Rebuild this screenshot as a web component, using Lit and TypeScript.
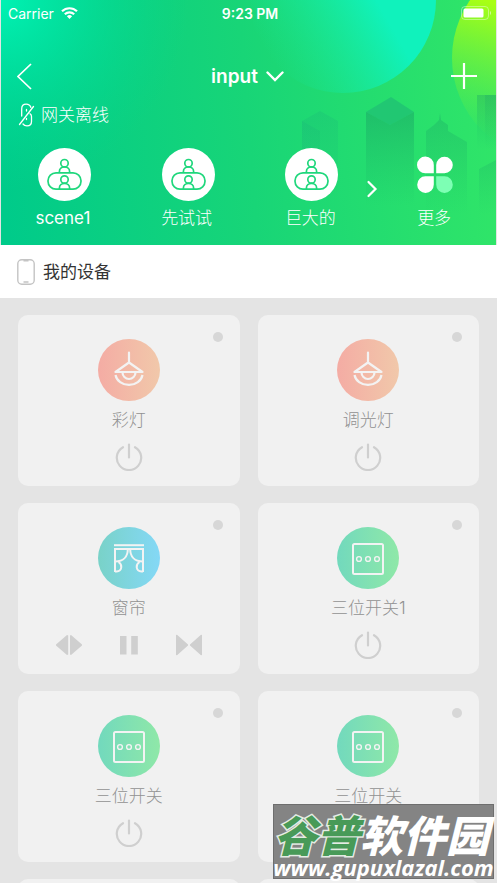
import { LitElement, html, svg, css } from "lit";
import { customElement, property } from "lit/decorators.js";

type Kind = "lamp" | "curtain" | "switch";
interface Device {
  name: string;
  kind: Kind;
}

const SCENES = ["scene1", "先试试", "巨大的"];

const DEVICES: Device[] = [
  { name: "彩灯", kind: "lamp" },
  { name: "调光灯", kind: "lamp" },
  { name: "窗帘", kind: "curtain" },
  { name: "三位开关1", kind: "switch" },
  { name: "三位开关", kind: "switch" },
  { name: "三位开关", kind: "switch" },
];

const glyphs = {
  lamp: svg`
    <path d="M31 13.5V23M31 23.5L17.5 33H44.5Z" stroke-width="2.2"/>
    <path d="M24.5 33.5a6.5 6.5 0 0 0 13 0M17.5 36a13.7 12 0 0 0 27 0" stroke-width="2.2" stroke-linecap="butt"/>`,
  curtain: svg`
    <g stroke-width="2" stroke-linecap="butt" stroke-linejoin="miter">
      <path d="M16 18.2H46"/>
      <path d="M17 45V22H45V45"/>
      <path d="M29.800 22C29.800 29 26 34.500 17 34.500M32.200 22C32.200 29 36 34.500 45 34.500"/>
      <path d="M20.500 35C24.500 37.500 24.500 44 18.500 44.500H17M41.500 35C37.500 37.500 37.500 44 43.500 44.500H45"/>
    </g>`,
  switch: svg`
    <rect x="16" y="17" width="30" height="30" rx="1.5" stroke-width="2"/>
    <g stroke-width="1.4"><circle cx="22" cy="32" r="2.4"/><circle cx="31" cy="32" r="2.4"/><circle cx="40" cy="32" r="2.4"/></g>`,
};

@customElement("device-card")
export class DeviceCard extends LitElement {
  @property({ attribute: false }) device!: Device;

  static styles = css`
    :host {
      display: flex;
      flex-direction: column;
      align-items: center;
      position: relative;
      box-sizing: border-box;
      padding: 24px 12px 15px;
      border-radius: 10px;
      background: #f1f1f1;
    }
    .dot {
      position: absolute;
      top: 17px;
      right: 17px;
      width: 10px;
      height: 10px;
      border-radius: 50%;
      background: #d7d7d7;
    }
    .icon {
      width: 62px;
      height: 62px;
      border-radius: 50%;
    }
    .icon svg,
    button svg {
      display: block;
      fill: none;
    }
    .icon svg {
      stroke: #f3f3f3;
      stroke-linecap: round;
      stroke-linejoin: round;
    }
    .lamp {
      background: linear-gradient(90deg, #f4aca4, #f1c8aa);
    }
    .curtain {
      background: linear-gradient(90deg, #79d2c8, #84d8f6);
    }
    .switch {
      background: linear-gradient(90deg, #72d9bd, #8fe8a8);
    }
    h2 {
      margin: 7px 0 11px;
      font-size: 17px;
      font-weight: 300;
      line-height: 24px;
      color: #929292;
    }
    .controls {
      display: flex;
      gap: 32px;
    }
    button {
      padding: 0;
      border: 0;
      background: none;
      color: #cfcfcf;
    }
    .fill {
      fill: currentColor;
    }
  `;

  private controls() {
    if (this.device.kind !== "curtain") {
      return html`<button aria-label="电源">
        <svg width="28" height="28" viewBox="0 0 28 28" stroke="currentColor" stroke-width="2.2" stroke-linecap="round">
          <path d="M14 1.500V14.500M8 4.200a12.200 12.200 0 1 0 12 0" />
        </svg>
      </button>`;
    }
    return html`
      <button aria-label="打开">
        <svg width="28" height="28" viewBox="0 0 28 28">
          <path class="fill" d="M13.200 4.500V23.500L12 24L1 14.500V13.500L12 4ZM15 4.500V23.500L16 24L27 14.500V13.500L16 4Z" />
        </svg>
      </button>
      <button aria-label="暂停">
        <svg width="28" height="28" viewBox="0 0 28 28">
          <path class="fill" d="M5 5H11.500V23.500H5ZM16.200 5H22.800V23.500H16.200Z" />
        </svg>
      </button>
      <button aria-label="关闭">
        <svg width="28" height="28" viewBox="0 0 28 28">
          <path class="fill" d="M1 4L2 3.800L13 13.500V14.500L2 24.200L1 24ZM27 4L26 3.800L15 13.500V14.500L26 24.200L27 24Z" />
        </svg>
      </button>
    `;
  }

  render() {
    return html`
      <span class="dot"></span>
      <div class="icon ${this.device.kind}">
        <svg width="62" height="62" viewBox="0 0 62 62">${glyphs[this.device.kind]}</svg>
      </div>
      <h2>${this.device.name}</h2>
      <div class="controls">${this.controls()}</div>
    `;
  }
}

@customElement("app-root")
export class AppRoot extends LitElement {
  static styles = css`
    :host {
      display: flex;
      flex-direction: column;
      position: relative;
      height: 100vh;
      overflow: hidden;
      background: #e4e4e4;
      font-family: Inter, "Noto Sans CJK SC", sans-serif;
    }
    button {
      padding: 0;
      border: 0;
      background: none;
      font: inherit;
      color: inherit;
    }
    svg {
      display: block;
      flex: none;
      fill: none;
    }
    header {
      position: relative;
      flex: none;
      margin: 0 1px;
      color: #fff;
    }
    .art {
      position: absolute;
      inset: 0;
      width: 100%;
      height: 100%;
    }
    .status,
    .nav {
      position: relative;
      display: grid;
      grid-template-columns: 1fr auto 1fr;
      align-items: center;
    }
    .status {
      height: 26px;
      padding: 0 4px 0 7px;
      font-size: 14px;
    }
    .carrier {
      display: flex;
      align-items: center;
      gap: 7px;
    }
    .time {
      font-size: 14px;
      font-weight: 600;
    }
    .end {
      justify-self: end;
    }
    .nav {
      height: 54px;
      margin-top: 23px;
      padding: 0 18px 0 16px;
    }
    .nav button {
      display: flex;
      align-items: center;
    }
    .title {
      gap: 8px;
      font-size: 19px;
      font-weight: 600;
    }
    .offline {
      position: relative;
      display: flex;
      align-items: center;
      gap: 6px;
      height: 24px;
      margin: 0 17px;
      font-size: 17px;
      font-weight: 300;
      line-height: 24px;
    }
    .scenes {
      position: relative;
      display: grid;
      grid-template-columns: repeat(4, 1fr);
      padding: 21px 0 15px;
    }
    .scene {
      display: flex;
      flex-direction: column;
      align-items: center;
      gap: 5px;
      font-size: 17px;
      font-weight: 400;
      line-height: 24px;
    }
    .bubble {
      margin-left: 3px;
    }
    .cjk {
      font-weight: 300;
    }
    .next {
      position: absolute;
      left: 75%;
      top: 53px;
      margin-left: -6px;
    }
    .section {
      flex: none;
      display: flex;
      align-items: center;
      gap: 8px;
      height: 53px;
      padding: 0 17px;
      background: #fff;
      color: #333;
    }
    h1 {
      margin: 0;
      font-size: 17px;
      font-weight: 400;
      line-height: 24px;
    }
    .devices {
      display: grid;
      grid-template-columns: 1fr 1fr;
      gap: 17px 18px;
      padding: 17px 18px;
    }
    .blank {
      height: 171px;
      border-radius: 10px;
      background: #f1f1f1;
    }
    .mark {
      position: absolute;
      right: 3px;
      bottom: 4px;
      box-sizing: border-box;
      width: 221px;
      height: 75px;
      border: 1px solid #6e6e6e;
      background: #848484;
      color: #fff;
      white-space: nowrap;
    }
    .name {
      height: 50px;
      font: italic 900 43px/56px "Noto Sans CJK SC", sans-serif;
    }
    .green {
      color: #489a58;
      -webkit-text-stroke: 3px #e4ece4;
      paint-order: stroke fill;
    }
    .url {
      display: flex;
      justify-content: center;
      font: italic 700 22px/24px "Open Sans", sans-serif;
      color: #fff;
      text-decoration: none;
    }
  `;

  private art() {
    return html`<svg class="art" viewBox="1 0 495 245" preserveAspectRatio="none" aria-hidden="true">
      <defs>
        <linearGradient id="base" gradientUnits="userSpaceOnUse" x1="1" y1="150" x2="496" y2="110">
          <stop offset="0" stop-color="#00cb8a" /><stop offset=".5" stop-color="#18d577" /><stop offset="1" stop-color="#30e568" />
        </linearGradient>
        <radialGradient id="glow" gradientUnits="userSpaceOnUse" cx="0" cy="0" r="190">
          <stop offset="0" stop-color="#00f3b4" /><stop offset=".4" stop-color="#00e8a8" stop-opacity=".6" /><stop offset="1" stop-color="#00d890" stop-opacity="0" />
        </radialGradient>
        <linearGradient id="cyan" gradientUnits="userSpaceOnUse" x1="280" y1="75" x2="385" y2="15">
          <stop offset="0" stop-color="#14e8a0" stop-opacity="0" /><stop offset="1" stop-color="#10f2bc" />
        </linearGradient>
        <linearGradient id="lime" gradientUnits="userSpaceOnUse" x1="500" y1="5" x2="465" y2="135">
          <stop offset="0" stop-color="#a8ff14" /><stop offset="1" stop-color="#6af040" stop-opacity="0" />
        </linearGradient>
        <linearGradient id="wall" x1="0" x2="0" y1="0" y2="1">
          <stop offset="0" stop-color="#1ba766" stop-opacity=".55" /><stop offset="1" stop-color="#1bb766" stop-opacity="0" />
        </linearGradient>
        <linearGradient id="faint" x1="0" x2="0" y1="0" y2="1">
          <stop offset="0" stop-color="#1bb878" stop-opacity=".3" /><stop offset="1" stop-color="#1bb878" stop-opacity="0" />
        </linearGradient>
      </defs>
      <path fill="url(#base)" d="M1 0H496V245H1Z" />
      <path fill="url(#glow)" d="M1 0H300V245H1Z" />
      <circle cx="343" cy="0" r="93" fill="url(#cyan)" />
      <circle cx="554" cy="58" r="102" fill="url(#lime)" />
      <path fill="url(#faint)" d="M302 121L320 111L338 121V200H302Z" />
      <path fill="url(#faint)" d="M302 121L320 131V200H302Z" />
      <path fill="#20bf74" fill-opacity=".75" d="M366 112L391 97L414 112L390 125Z" />
      <path fill="url(#wall)" d="M366 112L390 125L414 112V206H366Z" />
      <path fill="url(#wall)" opacity=".7" d="M426 131L434 125L439 120L440 113L441 120L448 125V131L467 142V214H426Z" />
      <path fill="url(#wall)" opacity=".7" d="M477 95H496V150H477Z" />
      <path fill="url(#wall)" opacity=".5" d="M485 95H496V150H485Z" />
      <path fill="url(#wall)" opacity=".5" d="M479 169L496 160V215H479Z" />
    </svg>`;
  }

  private scene(name: string) {
    return html`<button class="scene">
      <svg class="bubble" width="53" height="53" viewBox="0 0 53 53" stroke="#1fd77c" stroke-width="1.7">
        <circle cx="26.500" cy="26.500" r="26.500" fill="#fff" stroke="none" />
        <circle cx="26.500" cy="15.200" r="3.700" />
        <path d="M21.400 24.500V23.500a5.100 4.600 0 0 1 10.200 0V24.500" />
        <rect x="10" y="24.800" width="33" height="16.400" rx="8" />
        <circle cx="26.500" cy="31.500" r="3.700" />
        <path d="M21.400 41V40a5.100 4.600 0 0 1 10.200 0V41" />
      </svg>
      <span class=${/^\w+$/.test(name) ? "" : "cjk"}>${name}</span>
    </button>`;
  }

  render() {
    return html`
      <header>
        ${this.art()}
        <div class="status">
          <span class="carrier">Carrier
            <svg width="17" height="12" viewBox="0 0 17 12" stroke="#fff" stroke-width="2.2">
              <path d="M1 4.300a10.800 10.800 0 0 1 15 0M3.800 7.200a6.800 6.800 0 0 1 9.400 0" />
              <path d="M8.500 12L5.900 9.300a3.800 3.800 0 0 1 5.200 0Z" fill="#fff" stroke="none" />
            </svg>
          </span>
          <span class="time">9:23 PM</span>
          <svg class="end" width="31" height="14" viewBox="0 0 31 14">
            <rect x=".5" y=".5" width="27" height="13" rx="3.500" stroke="#fff" stroke-opacity=".4" />
            <rect x="2.500" y="2.500" width="20" height="9" rx="1.500" fill="#fff" />
            <path d="M29 5v4a2.400 2.400 0 0 0 0-4Z" fill="#fff" fill-opacity=".5" />
          </svg>
        </div>
        <nav class="nav">
          <button aria-label="返回">
            <svg width="15" height="27" viewBox="0 0 15 27" stroke="#fff" stroke-width="1.700">
              <path d="M14 1L1 13.500L14 26" />
            </svg>
          </button>
          <button class="title">input
            <svg width="18" height="11" viewBox="0 0 18 11" stroke="#fff" stroke-width="2.400" stroke-linecap="round"><path d="M1.500 1.500L9 9L16.500 1.500" /></svg>
          </button>
          <button class="end" aria-label="添加">
            <svg width="28" height="28" viewBox="0 0 28 28" stroke="#fff" stroke-width="2.200"><path d="M14 1V27M1 14H27" /></svg>
          </button>
        </nav>
        <div class="offline">
          <svg width="17" height="24" viewBox="0 0 17 24" stroke="#fff" stroke-width="1.300" stroke-linecap="round">
            <path d="M1.500 21.500L15.500 3.500M3.700 13V6C3.700 3 5.500 1.200 8.200 1.200C10.500 1.200 12.200 2.400 12.800 4.300M8.500 6.500V8M8.500 16.500V15.500M5 21C6 22.400 7.500 22.800 9 22.800C11.800 22.800 13.500 21 13.500 18.500V13.500C13.500 12.300 13 11.400 12 10.800" />
          </svg>
          <span>网关离线</span>
        </div>
        <div class="scenes">
          ${SCENES.map((s) => this.scene(s))}
          <button class="scene">
            <svg width="53" height="53" viewBox="0 0 53 53">
              <path fill="#fff" d="M25.800 25.300H17.500a8.400 8.400 0 1 1 8.300-8.300ZM28.200 25.300V17a8.300 8.300 0 1 1 8.300 8.300ZM25.800 28.300V36.500a8.300 8.300 0 1 1-8.300-8.200Z" />
              <path fill="#7dffb4" d="M28.200 28.300H36.500a8.300 8.300 0 1 1-8.300 8.200Z" />
            </svg>
            <span class="cjk">更多</span>
          </button>
          <button class="next" aria-label="下一页">
            <svg width="12" height="18" viewBox="0 0 12 18" stroke="#fff" stroke-width="2.200" stroke-linecap="round"><path d="M2.500 2L9.500 9L2.500 16" /></svg>
          </button>
        </div>
      </header>
      <div class="section">
        <svg width="18" height="26" viewBox="0 0 18 26" stroke="#c4c4c4">
          <rect x=".8" y=".8" width="16.400" height="24.400" rx="4" stroke-width="1.400" />
          <path d="M6.500 1.700H11.500M6.500 23H11.500" stroke-width="1.400" />
        </svg>
        <h1>我的设备</h1>
      </div>
      <main class="devices">
        ${DEVICES.map((d) => html`<device-card .device=${d}></device-card>`)}
        <div class="blank"></div>
        <div class="blank"></div>
      </main>
      <div class="mark">
        <div class="name"><span class="green">谷普</span>软件园</div>
        <a class="url" href="#">www.gupuxlazal.com</a>
      </div>
    `;
  }
}
